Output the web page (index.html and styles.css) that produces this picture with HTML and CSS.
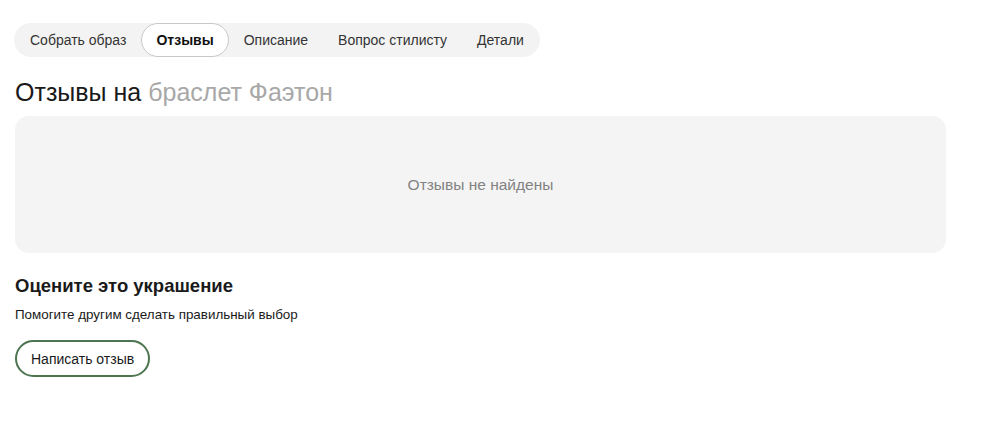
FILE: index.html
```html
<!DOCTYPE html>
<html lang="ru">
<head>
<meta charset="utf-8">
<link rel="stylesheet" href="styles.css">
</head>
<body>
<div class="page">
  <nav class="tabs">
    <span class="tab">Собрать образ</span>
    <span class="tab active">Отзывы</span>
    <span class="tab">Описание</span>
    <span class="tab">Вопрос стилисту</span>
    <span class="tab">Детали</span>
  </nav>
  <h1 class="title">Отзывы на <span class="muted">браслет Фаэтон</span></h1>
  <div class="empty">Отзывы не найдены</div>
  <h2 class="rate-title">Оцените это украшение</h2>
  <p class="rate-sub">Помогите другим сделать правильный выбор</p>
  <button class="write-btn">Написать отзыв</button>
</div>
</body>
</html>
```

FILE: styles.css
```css
* { box-sizing: border-box; }
body {
  margin: 0;
  font-family: "Liberation Sans", Arial, sans-serif;
  color: #1a1a1a;
  background: #fff;
}
.page {
  padding: 23px 54px 0 15px;
  width: 1000px;
}
.tabs {
  display: inline-flex;
  align-items: center;
  background: #f3f3f3;
  border-radius: 17px;
  height: 34px;
  padding: 0 1px;
  margin-left: -1px;
}
.tab {
  font-size: 14px;
  color: #333;
  padding: 0 14px;
  height: 34px;
  line-height: 32px;
  border: 1px solid transparent;
  border-radius: 17px;
  white-space: nowrap;
}
.tab.active {
  background: #fff;
  border-color: #c8c8c8;
  font-weight: bold;
  color: #111;
}
.title {
  margin: 20px 0 0;
  font-size: 25px;
  font-weight: normal;
  line-height: 30px;
  color: #1a1a1a;
}
.muted { color: #a8a8a8; }
.empty {
  margin-top: 9px;
  height: 137px;
  width: 931px;
  background: #f4f4f4;
  border-radius: 14px;
  display: flex;
  align-items: center;
  justify-content: center;
  font-size: 15.5px;
  color: #828282;
}
.rate-title {
  margin: 22px 0 0;
  font-size: 18.5px;
  font-weight: bold;
  line-height: 22px;
  color: #1a1a1a;
}
.rate-sub {
  margin: 10px 0 0;
  font-size: 13.4px;
  line-height: 16px;
  color: #1a1a1a;
}
.write-btn {
  margin-top: 17px;
  height: 37px;
  padding: 0 14px;
  border: 2px solid #4d7550;
  border-radius: 19px;
  background: #fff;
  font-family: inherit;
  font-size: 14px;
  color: #1a1a1a;
}
```
